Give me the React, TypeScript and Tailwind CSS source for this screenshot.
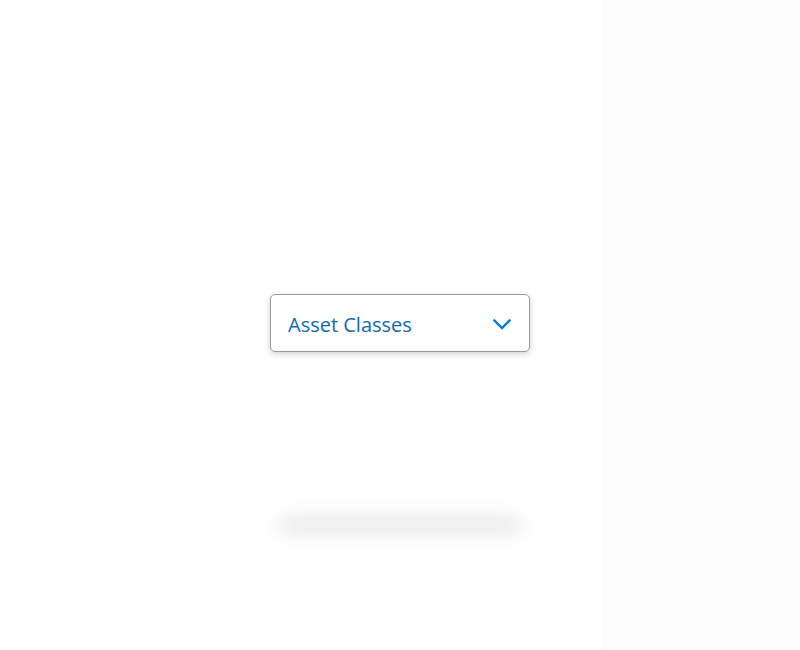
import React from "react";

function Chevron() {
  return (
    <svg width="18" height="11" viewBox="0 0 18 11" fill="none" className="mt-[3px]">
      <path d="M1.5 1.5 L9 9 L16.5 1.5" stroke="#0b7ad1" strokeWidth="2.4" strokeLinecap="square" />
    </svg>
  );
}

export default function App() {
  return (
    <div className="h-[650px] w-[800px] bg-[linear-gradient(to_right,#ffffff_602px,#fcfcfc_602px)] font-['Open_Sans',sans-serif]">
      <div className="flex flex-col items-center pt-[294px]">
        <button className="flex h-[58px] w-[260px] items-center justify-between rounded-[5px] border border-[#9a9a9a] bg-white pl-[17px] pr-[18px] shadow-[0_2px_6px_rgba(0,0,0,0.18)]">
          <span className="text-[20px] text-[#1169ad] mt-[3px]">Asset Classes</span>
          <Chevron />
        </button>
        <div className="mt-[164px] h-[18px] w-[244px] rounded-full bg-[#e9e9e9] blur-[9px]" />
      </div>
    </div>
  );
}
